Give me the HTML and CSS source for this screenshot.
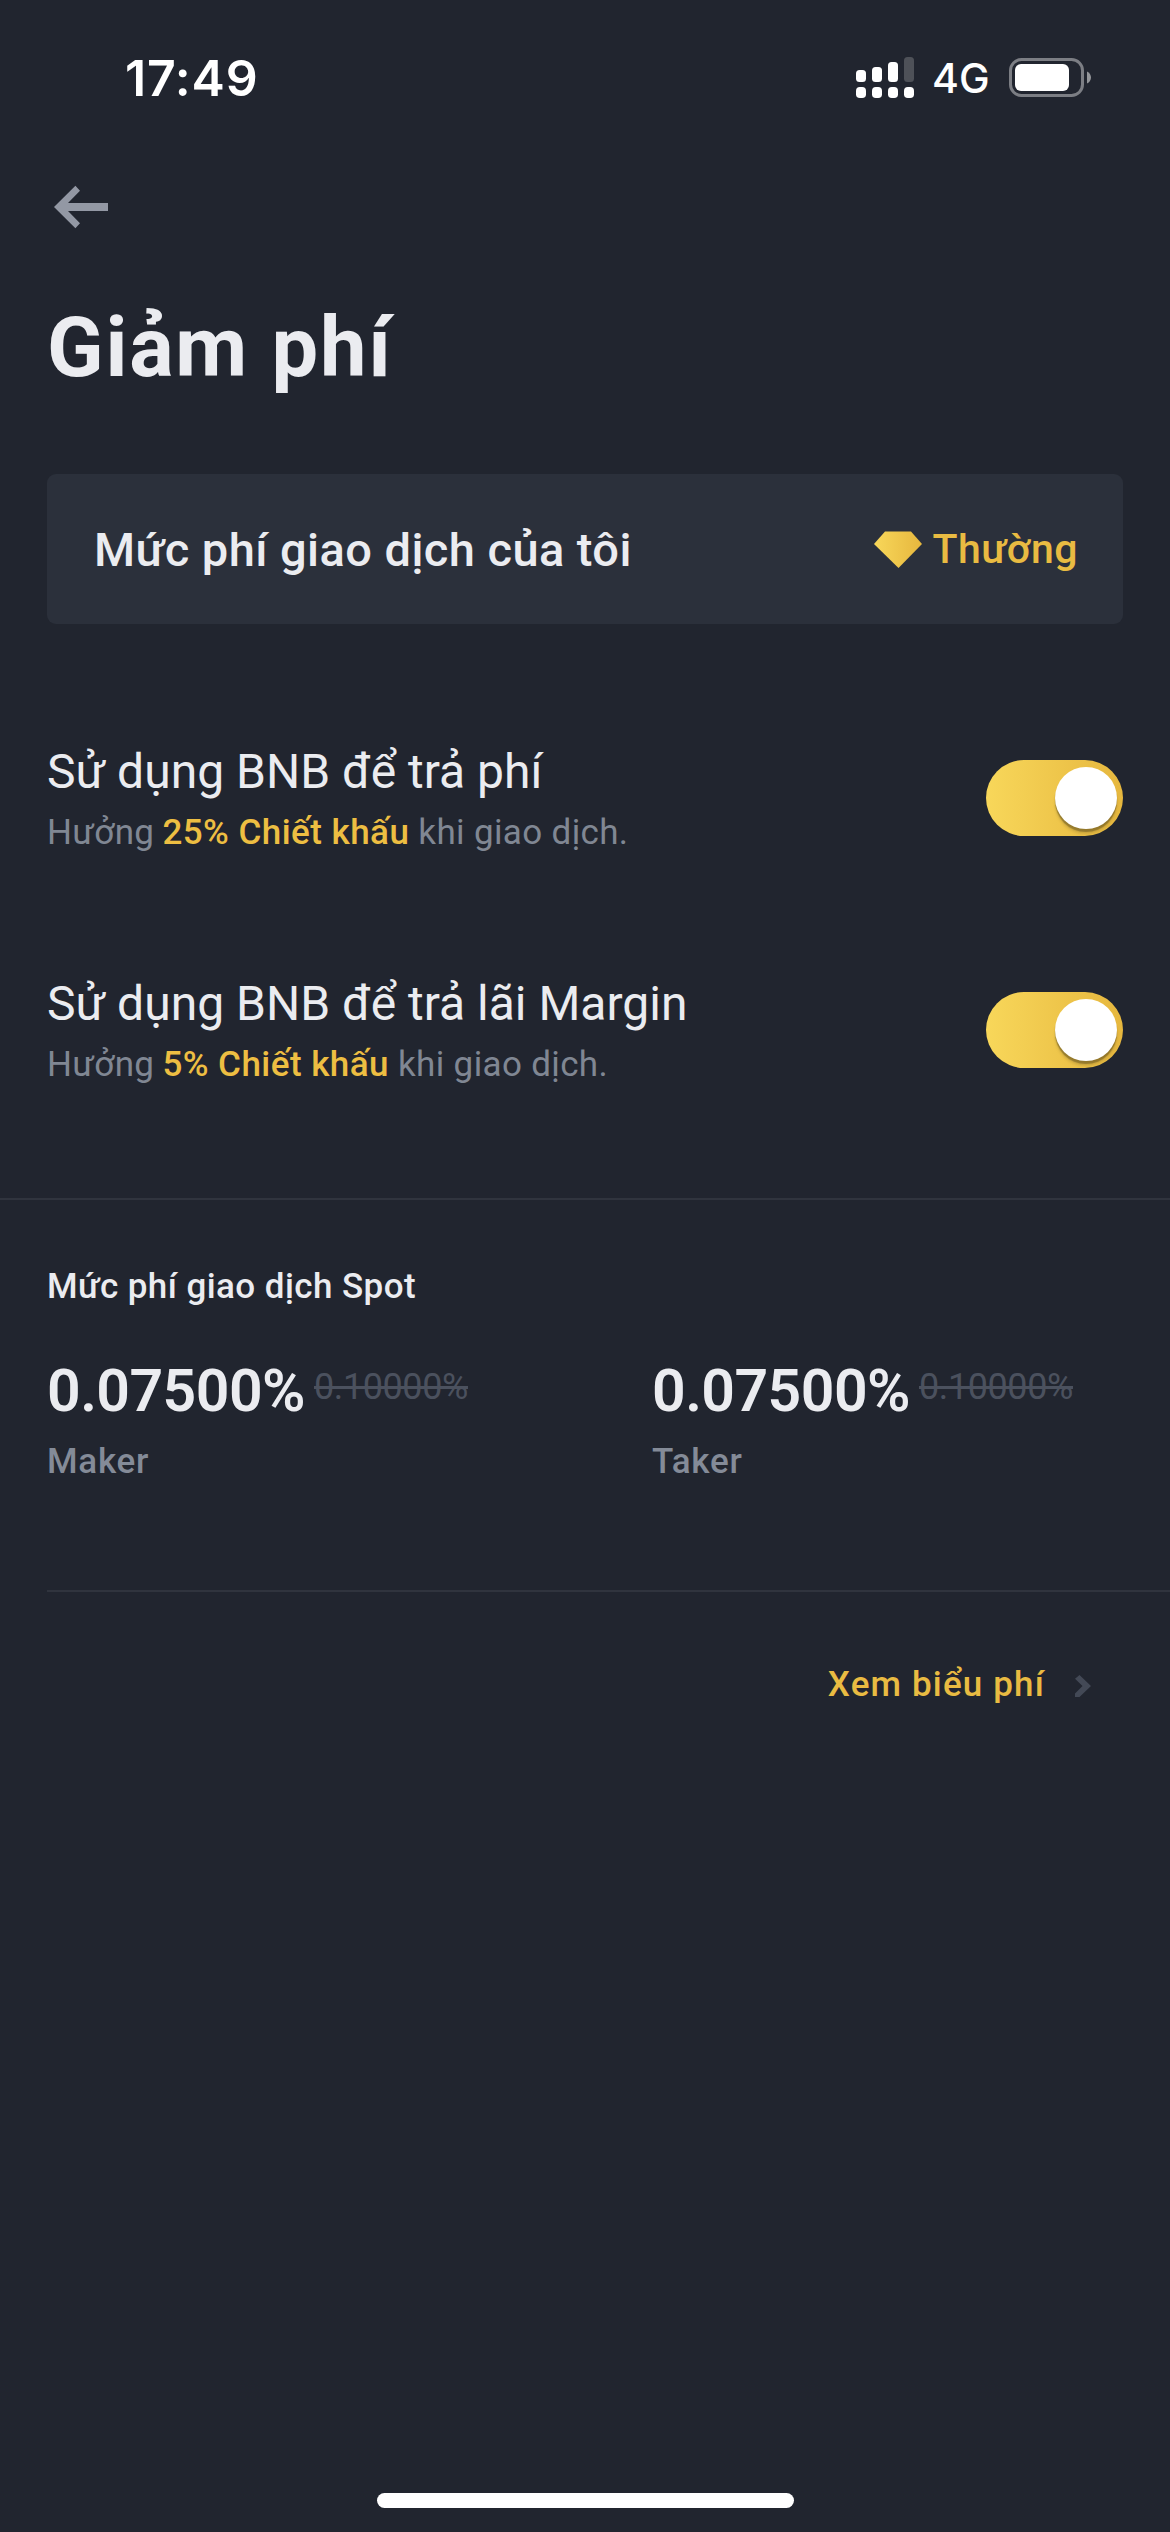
FILE: index.html
```html
<!DOCTYPE html>
<html lang="vi">
<head>
<meta charset="utf-8">
<title>Giảm phí</title>
<link rel="stylesheet" href="styles.css">
</head>
<body>
<div class="screen">
  <header class="status">
    <span class="time">17:49</span>
    <div class="status-right">
      <svg class="signal" width="58" height="42" viewBox="0 0 58 42" fill="#fff">
        <rect x="0" y="13" width="10" height="12" rx="3.5"/>
        <rect x="16" y="10" width="10" height="15" rx="3.5"/>
        <rect x="32" y="5" width="10" height="20" rx="3.5"/>
        <rect x="48" y="0" width="10" height="25" rx="3.5" fill="#4e5158"/>
        <rect x="0" y="30" width="10" height="11" rx="3.8"/>
        <rect x="16" y="30" width="10" height="11" rx="3.8"/>
        <rect x="32" y="30" width="10" height="11" rx="3.8"/>
        <rect x="48" y="30" width="10" height="11" rx="3.8"/>
      </svg>
      <span class="network">4G</span>
      <svg class="battery" width="83" height="40" viewBox="0 0 83 40">
        <rect x="1.5" y="1.5" width="72" height="36" rx="11" fill="none" stroke="#7c7e84" stroke-width="3"/>
        <rect x="6" y="6" width="54" height="27" rx="6" fill="#fff"/>
        <path d="M78 13.5C80.500 14.500 82 17 82 19.500S80.500 24.500 78 25.500Z" fill="#94969a"/>
      </svg>
    </div>
  </header>

  <nav class="nav">
    <svg width="54" height="44" viewBox="0 0 54 44" fill="#9398a4">
      <path d="M0 22L21.400 .7L26 5.700L14 18H54V26H14L26 38.300L21.400 43.300Z"/>
    </svg>
  </nav>
  <h1 class="title">Giảm phí</h1>

  <section class="level">
    <span class="level-label">Mức phí giao dịch của tôi</span>
    <span class="level-value">
      <svg width="48" height="37" viewBox="0 0 48 37">
        <defs>
          <linearGradient id="gold" x1="0" x2="1" y1="0" y2="0">
            <stop offset="0" stop-color="#f8d75a"/>
            <stop offset="1" stop-color="#e6b73e"/>
          </linearGradient>
        </defs>
        <path d="M11 .5H37L48 13L24.500 37L0 13Z" fill="url(#gold)"/>
      </svg>
      <span class="level-name">Thường</span>
    </span>
  </section>

  <section class="options">
    <div class="option">
      <div class="option-text">
        <div class="option-title">Sử dụng BNB để trả phí</div>
        <div class="option-note">Hưởng <span class="gold">25% Chiết khấu</span> khi giao dịch.</div>
      </div>
      <div class="toggle"><span class="knob"></span></div>
    </div>
    <div class="option">
      <div class="option-text">
        <div class="option-title">Sử dụng BNB để trả lãi Margin</div>
        <div class="option-note">Hưởng <span class="gold">5% Chiết khấu</span> khi giao dịch.</div>
      </div>
      <div class="toggle"><span class="knob"></span></div>
    </div>
  </section>

  <section class="spot">
    <h2 class="spot-title">Mức phí giao dịch Spot</h2>
    <div class="rates">
      <div class="rate">
        <div class="rate-line"><span class="rate-now">0.07500%</span><s class="rate-old">0.10000%</s></div>
        <div class="rate-name">Maker</div>
      </div>
      <div class="rate">
        <div class="rate-line"><span class="rate-now">0.07500%</span><s class="rate-old">0.10000%</s></div>
        <div class="rate-name">Taker</div>
      </div>
    </div>
  </section>

  <a class="schedule">
    <span class="schedule-text">Xem biểu phí</span>
    <svg class="chevron" width="16" height="22" viewBox="0 0 16 22" fill="#434956">
      <path d="M4.500 0L16 11L4.500 22H0V18.500L7.500 11L0 3.800Z"/>
    </svg>
  </a>

  <div class="home"></div>
</div>
</body>
</html>
```
FILE: styles.css
```css
* {
  box-sizing: border-box;
}

body {
  margin: 0;
  background: #21252f;
  color: #ebecf0;
  font-family: Roboto, "Liberation Sans", sans-serif;
}

.screen {
  display: flex;
  flex-direction: column;
  width: 1170px;
  height: 2532px;
  padding-bottom: 24px;
  overflow: hidden;
}

svg {
  display: block;
  flex: none;
}

/* Status bar */
.status {
  display: flex;
  align-items: center;
  justify-content: space-between;
  height: 156px;
  padding: 0 78px 0 125px;
  color: #fff;
  font-family: Inter, sans-serif;
}

.time {
  font-size: 50px;
  font-weight: 600;
  letter-spacing: 0.8px;
}

.status-right {
  display: flex;
  align-items: center;
}

.network {
  width: 77px;
  margin-left: 18px;
  font-size: 41px;
  font-weight: 500;
}

/* Page heading */
.nav {
  padding: 29px 54px 0;
}

.title {
  margin: 69px 47px 0;
  font-size: 83px;
  font-weight: 700;
  line-height: 100px;
  letter-spacing: 1.8px;
}

/* Fee level card */
.level {
  display: flex;
  align-items: center;
  justify-content: space-between;
  height: 150px;
  margin: 76px 47px 0;
  padding: 0 45px 0 47px;
  border-radius: 9px;
  background: #2b303b;
}

.level-label {
  font-size: 47px;
  font-weight: 500;
  letter-spacing: 0.43px;
}

.level-value {
  display: flex;
  align-items: center;
  gap: 10px;
}

.level-name {
  color: #e9bb42;
  font-size: 41px;
  font-weight: 500;
  letter-spacing: 0.5px;
}

/* BNB discount switches */
.options {
  display: flex;
  flex-direction: column;
  gap: 116px;
  margin: 118px 47px 0;
}

.option {
  display: flex;
  justify-content: space-between;
  height: 116px;
}

.option-title {
  font-size: 48px;
  line-height: 60px;
}

.option-note {
  margin-top: 6px;
  color: #808793;
  font-size: 35px;
  line-height: 50px;
  letter-spacing: 0.35px;
}

.gold {
  margin-left: -1px;
  color: #edbe42;
  font-weight: 500;
  letter-spacing: 0.45px;
}

.toggle {
  display: flex;
  justify-content: flex-end;
  width: 137px;
  height: 76px;
  margin-top: 18px;
  padding: 7px 6px;
  border-radius: 38px;
  background: linear-gradient(90deg, #f8d75a, #e6b73e);
  overflow: hidden;
}

.knob {
  width: 62px;
  height: 62px;
  border-radius: 50%;
  background: #fff;
  box-shadow: 0 3px 1px rgba(0, 0, 0, 0.28), 0 5px 3px rgba(0, 0, 0, 0.12);
}

/* Spot fees */
.spot {
  margin-top: 108px;
  padding: 62px 47px 0;
  border-top: 2px solid #30343e;
}

.spot-title {
  margin: 0;
  font-size: 35px;
  font-weight: 500;
  line-height: 50px;
  letter-spacing: 0.43px;
}

.rates {
  display: grid;
  grid-template-columns: 605px 1fr;
  margin-top: 44px;
}

.rate-line {
  display: flex;
}

.rate-now {
  width: 267px;
  font-size: 59px;
  font-weight: 600;
  line-height: 70px;
  letter-spacing: -0.57px;
}

.rate-old {
  margin-top: 6px;
  color: #4b515e;
  font-size: 36px;
  line-height: 50px;
  letter-spacing: -0.41px;
}

.rate-name {
  margin-top: 11px;
  color: #848b98;
  font-size: 35px;
  font-weight: 500;
  line-height: 50px;
  letter-spacing: 0.7px;
}

/* Fee schedule link */
.schedule {
  display: flex;
  align-items: center;
  justify-content: flex-end;
  gap: 30px;
  margin: 103px 0 0 47px;
  padding: 68px 79px 0 0;
  border-top: 2px solid #30343e;
}

.schedule-text {
  color: #e9bb42;
  font-size: 35px;
  font-weight: 500;
  line-height: 50px;
  letter-spacing: 1.15px;
}

.chevron {
  margin-top: 2px;
}

.home {
  align-self: center;
  width: 417px;
  height: 15px;
  margin-top: auto;
  border-radius: 8px;
  background: #fff;
}
```
